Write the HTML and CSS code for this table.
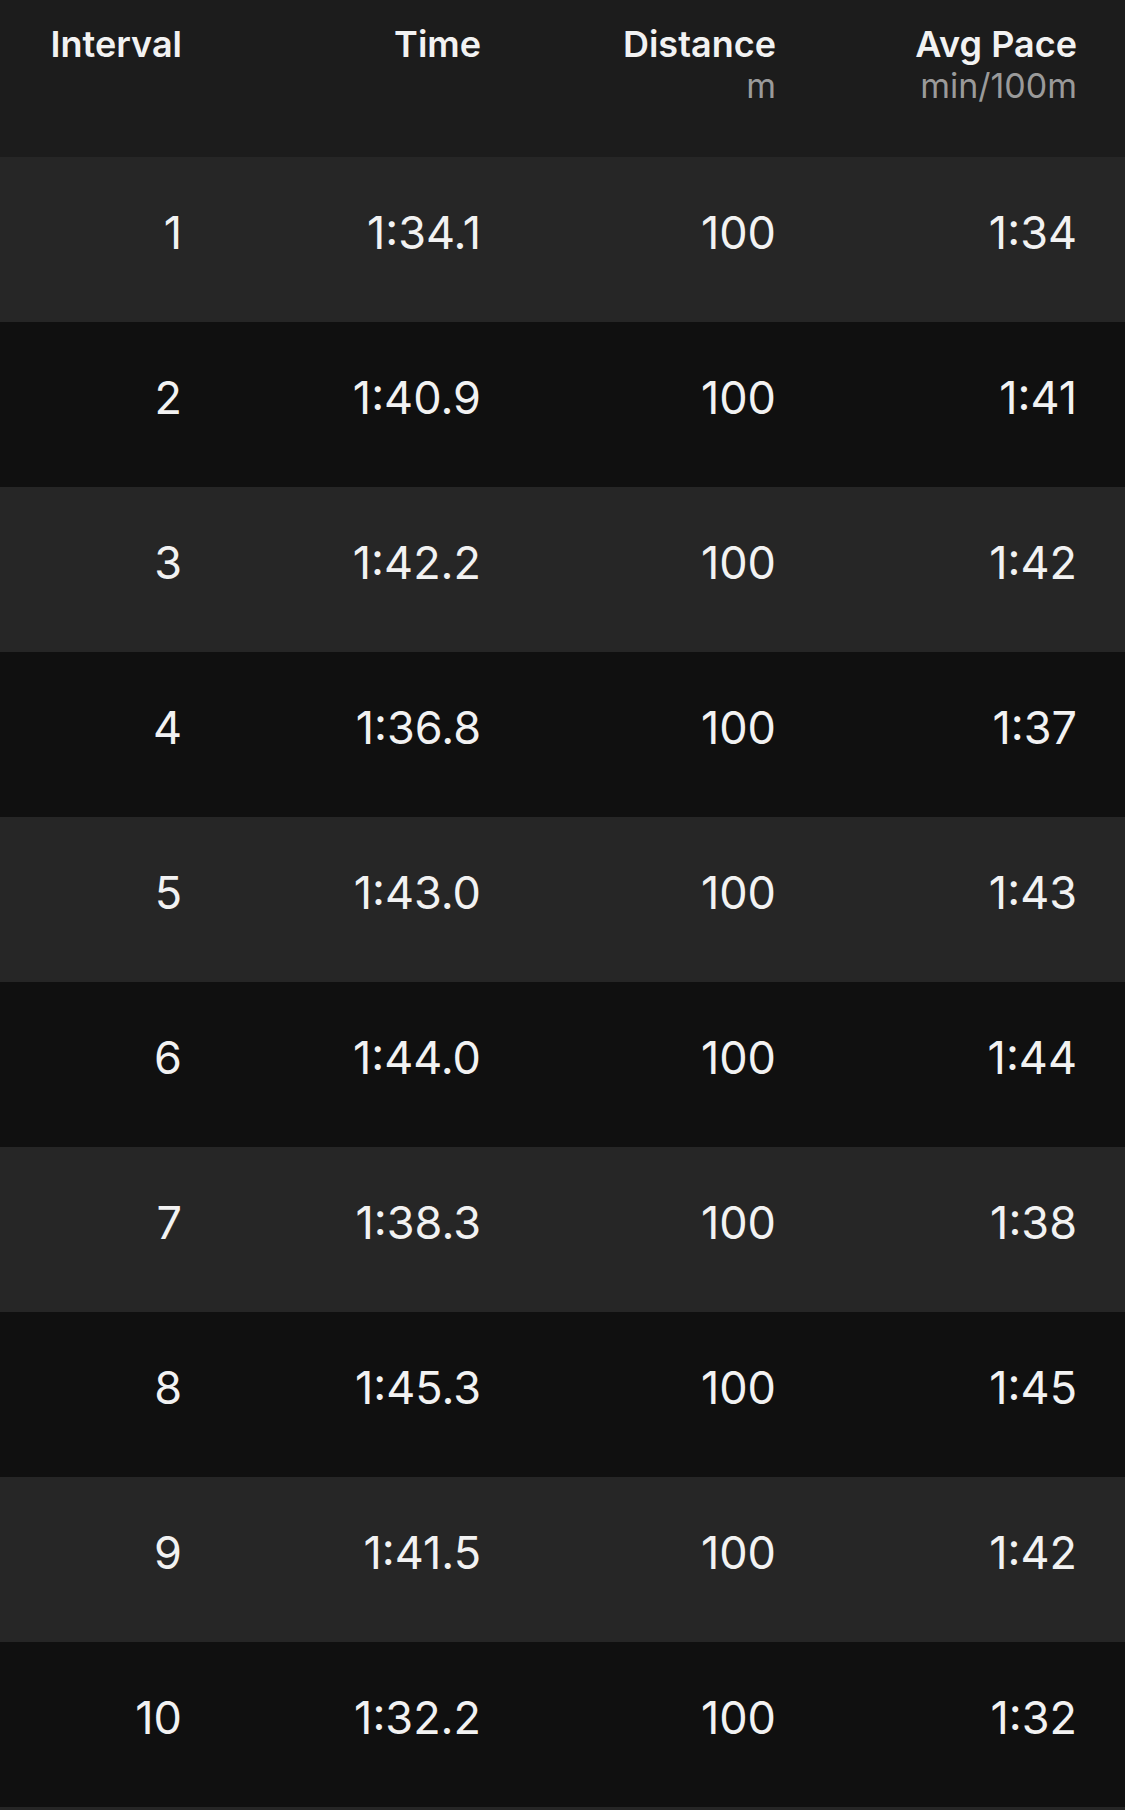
FILE: index.html
```html
<!DOCTYPE html>
<html>
<head>
<meta charset="utf-8">
<link rel="stylesheet" href="styles.css">
</head>
<body>
<div class="table">
  <div class="head">
    <div class="hcell"><span class="title">Interval</span></div>
    <div class="hcell"><span class="title">Time</span></div>
    <div class="hcell"><span class="title">Distance</span><span class="unit">m</span></div>
    <div class="hcell"><span class="title">Avg Pace</span><span class="unit">min/100m</span></div>
  </div>
  <div class="row odd"><div class="cell">1</div><div class="cell">1:34.1</div><div class="cell">100</div><div class="cell">1:34</div></div>
  <div class="row even"><div class="cell">2</div><div class="cell">1:40.9</div><div class="cell">100</div><div class="cell">1:41</div></div>
  <div class="row odd"><div class="cell">3</div><div class="cell">1:42.2</div><div class="cell">100</div><div class="cell">1:42</div></div>
  <div class="row even"><div class="cell">4</div><div class="cell">1:36.8</div><div class="cell">100</div><div class="cell">1:37</div></div>
  <div class="row odd"><div class="cell">5</div><div class="cell">1:43.0</div><div class="cell">100</div><div class="cell">1:43</div></div>
  <div class="row even"><div class="cell">6</div><div class="cell">1:44.0</div><div class="cell">100</div><div class="cell">1:44</div></div>
  <div class="row odd"><div class="cell">7</div><div class="cell">1:38.3</div><div class="cell">100</div><div class="cell">1:38</div></div>
  <div class="row even"><div class="cell">8</div><div class="cell">1:45.3</div><div class="cell">100</div><div class="cell">1:45</div></div>
  <div class="row odd"><div class="cell">9</div><div class="cell">1:41.5</div><div class="cell">100</div><div class="cell">1:42</div></div>
  <div class="row even"><div class="cell">10</div><div class="cell">1:32.2</div><div class="cell">100</div><div class="cell">1:32</div></div>
</div>
</body>
</html>
```
FILE: styles.css
```css
html, body {
  margin: 0;
  padding: 0;
  background: #262626;
}
body {
  width: 1125px;
  height: 1810px;
  overflow: hidden;
  font-family: Inter, "Noto Sans", sans-serif;
  color: #f2f2f2;
}
.table {
  display: flex;
  flex-direction: column;
}
.head, .row {
  display: grid;
  grid-template-columns: 182px 299px 295px 301px;
  padding-right: 48px;
  box-sizing: border-box;
}
.head {
  height: 157px;
  background: #1c1c1c;
  padding-top: 24px;
}
.hcell {
  display: flex;
  flex-direction: column;
  align-items: flex-end;
}
.title {
  font-size: 36px;
  line-height: 40px;
  font-weight: 600;
  color: #f2f2f2;
}
.unit {
  margin-top: 2px;
  font-size: 34px;
  line-height: 40px;
  font-weight: 400;
  color: #9a9a9a;
}
.row {
  height: 165px;
  padding-top: 54px;
}
.odd { background: #262626; }
.even { background: #101010; }
.cell {
  text-align: right;
  font-size: 45px;
  line-height: 44px;
  font-weight: 400;
}
```
